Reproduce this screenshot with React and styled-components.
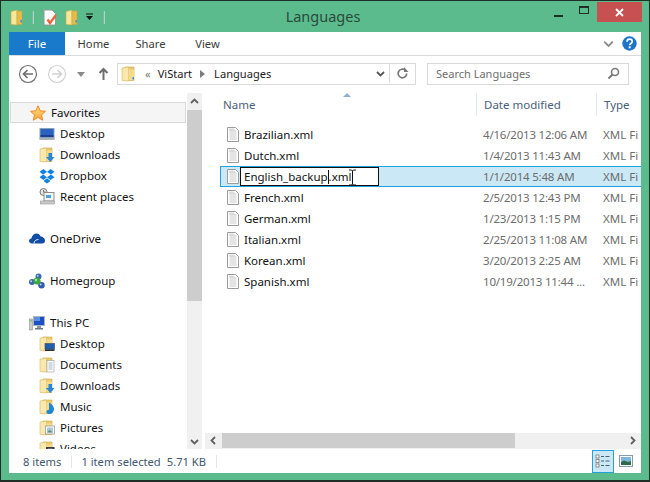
import React from "react";
import styled, { createGlobalStyle } from "styled-components";

const GlobalStyle = createGlobalStyle`
  html, body {
    margin: 0;
    padding: 0;
    background: #fff;
  }
  * {
    box-sizing: border-box;
  }
`;

const uiFont = `"Noto Sans", "Open Sans", sans-serif`;

// window frame
const Window = styled.div`
  width: 650px;
  height: 482px;
  background: #5cbb8d;
  border: 1px solid #1f2f28;
  border-width: 1px 1px 2px 1px;
  display: flex;
  flex-direction: column;
  overflow: hidden;
  font-family: ${uiFont};
  font-size: 11.5px;
  color: #111;
`;

const TitleBar = styled.div`
  height: 31px;
  flex: none;
  position: relative;
  display: flex;
  align-items: flex-start;
  padding: 7px 0 0 9px;
`;

const QuickIcons = styled.div`
  display: flex;
  align-items: center;
  height: 18px;
  gap: 7px;
`;

const QuickSep = styled.div`
  width: 2px;
  height: 13px;
  background: #a9d8c0;
  border-left: 1px solid #7fb79c;
  margin: 0 2px;
`;

const Title = styled.div`
  position: absolute;
  left: 0;
  right: 4px;
  top: 5px;
  text-align: center;
  font-size: 14.5px;
  color: #2a4a3c;
`;

const WindowButtons = styled.div`
  position: absolute;
  right: 7px;
  top: 1px;
  display: flex;
  align-items: flex-start;
`;

const CaptionButton = styled.div`
  width: ${(props) => props.$w}px;
  height: 20px;
  display: flex;
  align-items: center;
  justify-content: center;
  background: ${(props) => props.$bg || "transparent"};
`;

const MinGlyph = styled.div`
  width: 9px;
  height: 2px;
  margin-top: 7px;
  background: #1f2f28;
`;

const MaxGlyph = styled.div`
  width: 10px;
  height: 8px;
  margin-bottom: 4px;
  border: 1px solid #1f2f28;
  border-top-width: 2px;
`;

const Client = styled.div`
  flex: 1;
  margin: 0 8px 7px 8px;
  background: #fff;
  display: flex;
  flex-direction: column;
  min-height: 0;
`;

// ribbon tabs
const Ribbon = styled.div`
  height: 24px;
  flex: none;
  display: flex;
  align-items: stretch;
  border-bottom: 1px solid #dadbdc;
  position: relative;
`;

const FileTab = styled.div`
  width: 56px;
  height: 23px;
  background: #1979ca;
  color: #fff;
  display: flex;
  align-items: center;
  justify-content: center;
`;

const Tab = styled.div`
  width: 57px;
  display: flex;
  align-items: center;
  justify-content: center;
  color: #3b3b3b;
  font-size: 11.2px;
`;

const RibbonRight = styled.div`
  margin-left: auto;
  display: flex;
  align-items: center;
  gap: 8px;
  padding-right: 4px;
`;

// navigation row
const NavRow = styled.div`
  height: 37px;
  flex: none;
  display: flex;
  align-items: flex-start;
  padding: 7px 12px 0 9px;
`;

const NavIcons = styled.div`
  display: flex;
  align-items: center;
  width: 99px;
  height: 22px;
`;

const BackSlot = styled.div`
  display: flex;
  margin-right: 9px;
`;

const AddressBox = styled.div`
  width: 299px;
  height: 22px;
  flex: none;
  border: 1px solid #d9d9d9;
  display: flex;
  align-items: center;
  padding: 0 0 1px 3px;
  color: #1a1a1a;
  font-size: 11.1px;
`;

const Crumb = styled.span`
  margin: ${(props) => props.$m || "0"};
  color: ${(props) => props.$c || "#1a1a1a"};
`;

const AddressEnd = styled.div`
  margin-left: auto;
  display: flex;
  align-items: center;
  height: 100%;
`;

const RefreshCell = styled.div`
  width: 26px;
  height: 100%;
  border-left: 1px solid #d9d9d9;
  margin-left: 4px;
  display: flex;
  align-items: center;
  justify-content: center;
`;

const SearchBox = styled.div`
  width: 202px;
  height: 22px;
  flex: none;
  margin-left: 11px;
  border: 1px solid #d9d9d9;
  display: flex;
  align-items: center;
  justify-content: space-between;
  padding: 0 8px 1px 8px;
  color: #6d6d6d;
  font-size: 11px;
`;

// main body
const Body = styled.div`
  flex: 1;
  min-height: 0;
  display: flex;
`;

const NavPane = styled.div`
  width: 178px;
  flex: none;
  overflow: hidden;
  padding: 9px 1px 0 1px;
`;

const NavItem = styled.div`
  height: 21px;
  display: flex;
  align-items: center;
  gap: 5px;
  padding-left: ${(props) => (props.$child ? 29 : 19)}px;
  margin-bottom: ${(props) => (props.$gap ? 21 : 0)}px;
  background: ${(props) => (props.$active ? "#f5f5f5" : "transparent")};
  border: ${(props) => (props.$active ? "1px solid #d9d9d9" : "none")};
  flex: none;
  white-space: nowrap;
`;

const VScroll = styled.div`
  width: 15px;
  flex: none;
  background: #f0f0f0;
  display: flex;
  flex-direction: column;
  align-items: center;
`;

const ScrollCap = styled.div`
  width: 15px;
  height: ${(props) => props.$h}px;
  flex: none;
  display: flex;
  align-items: center;
  justify-content: center;
`;

const VThumb = styled.div`
  width: 15px;
  height: 191px;
  flex: none;
  background: #cdcdcd;
`;

const Content = styled.div`
  flex: 1;
  min-width: 0;
  margin-left: 3px;
  display: flex;
  flex-direction: column;
  overflow: hidden;
`;

const HeaderRow = styled.div`
  height: 31px;
  flex: none;
  display: flex;
  position: relative;
  padding-left: 18px;
`;

const HeaderCell = styled.div`
  width: ${(props) => props.$w}px;
  flex: none;
  height: 23px;
  display: flex;
  align-items: center;
  padding-left: ${(props) => props.$pad}px;
  color: #4c607a;
  border-right: ${(props) => (props.$line ? "1px solid #e3e8ef" : "none")};
`;

const SortArrow = styled.div`
  position: absolute;
  left: 138px;
  top: 0;
  width: 0;
  height: 0;
  border-left: 4px solid transparent;
  border-right: 4px solid transparent;
  border-bottom: 4px solid #8fb0cc;
`;

const Rows = styled.div`
  flex: 1;
  min-height: 0;
  padding-left: 15px;
`;

const FileRow = styled.div`
  height: 21px;
  display: flex;
  align-items: center;
  white-space: nowrap;
  padding-left: ${(props) => (props.$selected ? 5 : 6)}px;
  background: ${(props) => (props.$selected ? "#cbe8f6" : "transparent")};
  border: ${(props) => (props.$selected ? "1px solid #26a0da" : "none")};
  border-right: none;
  position: relative;
`;

const FileName = styled.div`
  width: 243px;
  flex: none;
  padding-left: 4px;
`;

const RenameBox = styled.div`
  width: 139px;
  height: 19px;
  flex: none;
  margin-right: 104px;
  background: #fff;
  border: 1px solid #111;
  display: flex;
  align-items: center;
  padding-left: 3px;
`;

const Caret = styled.span`
  display: inline-block;
  width: 1px;
  height: 14px;
  background: #111;
  vertical-align: middle;
`;

const Mouse = styled.div`
  position: absolute;
  left: 127px;
  top: 2px;
  line-height: 0;
`;

const DateCell = styled.div`
  width: 120px;
  flex: none;
  color: #6d6d6d;
  letter-spacing: -0.2px;
`;

const TypeCell = styled.div`
  flex: 1;
  color: #6d6d6d;
`;

const HScroll = styled.div`
  height: 16px;
  flex: none;
  background: #f0f0f0;
  display: flex;
  align-items: stretch;
`;

const HThumb = styled.div`
  width: 293px;
  height: 15px;
  background: #cdcdcd;
`;

const HCap = styled.div`
  width: ${(props) => props.$w}px;
  height: 15px;
  flex: none;
  display: flex;
  align-items: center;
  justify-content: center;
  margin-left: ${(props) => (props.$end ? "auto" : "0")};
`;

// status bar
const StatusBar = styled.div`
  height: 24px;
  flex: none;
  display: flex;
  align-items: center;
  padding-left: 14px;
  color: #3f5670;
  font-size: 11.2px;
  position: relative;
`;

const StatusText = styled.span`
  margin-right: ${(props) => props.$mr || 0}px;
`;

const StatusSep = styled.div`
  width: 1px;
  height: 13px;
  background: #e6e6e6;
  margin-right: ${(props) => props.$mr || 0}px;
`;

const ViewButtons = styled.div`
  margin-left: auto;
  display: flex;
  align-items: center;
  height: 100%;
  padding-right: 7px;
  gap: 3px;
`;

const ViewButton = styled.div`
  width: ${(props) => (props.$active ? 22 : 17)}px;
  height: 23px;
  display: flex;
  align-items: center;
  justify-content: center;
  background: ${(props) => (props.$active ? "#cbe8f6" : "transparent")};
  border: ${(props) => (props.$active ? "1px solid #26a0da" : "none")};
`;

// icons
const Folder = ({ overlay, size = 16 }) => (
  <svg width={size} height={size} viewBox="0 0 16 16">
    <path d="M4 1h9v13.500H4z" fill="#ecca6c" stroke="#cfa94e" strokeWidth="0.6" />
    <path d="M1 2 7.500 1v14L1 14.500z" fill="#f9e9ae" stroke="#d6b65f" strokeWidth="0.6" />
    <path d="M7.500 3.500H13V14H7.500z" fill="#f6dc8a" />
    {overlay}
  </svg>
);

const DownArrow = (
  <path d="M9.500 6h3.500v4h2.500l-4.200 5-4.300-5h2.500z" fill="#2a84d8" />
);

const overlays = {
  desktop: (
    <>
      <rect x="6" y="7.500" width="9.500" height="6" fill="#1f5fae" stroke="#445" strokeWidth="0.6" />
      <rect x="6" y="13.500" width="9.500" height="1.500" fill="#333" />
    </>
  ),
  documents: (
    <>
      <rect x="8" y="3.500" width="7" height="11.500" fill="#fff" stroke="#9a9a9a" strokeWidth="0.6" />
      <path d="M9.500 6h4M9.500 8h4M9.500 10h4M9.500 12h4" stroke="#8aa3c0" strokeWidth="0.8" />
    </>
  ),
  downloads: DownArrow,
  music: (
    <path d="M10 3.500c3 1.500 5 4 5 6.500 0 3-2.500 5-5 5-1.500 0-2.500-1-2.500-2.300 0-1.200 1-2 2.500-2z" fill="#1f86d6" />
  ),
  pictures: (
    <>
      <rect x="6.500" y="6" width="9" height="8" fill="#fff" stroke="#8d8d8d" strokeWidth="0.7" />
      <rect x="8" y="7.500" width="6" height="5" fill="#a9c9d8" />
      <path d="M8 12.500l2.500-2.500 3.500 2.500z" fill="#5f8a76" />
    </>
  ),
  videos: (
    <>
      <rect x="7" y="6" width="8.500" height="9" fill="#3b3b3b" />
      <rect x="9" y="7.500" width="4.500" height="4" fill="#8aa3c0" />
    </>
  ),
};

const DocIcon = () => (
  <svg width="14" height="17" viewBox="0 0 14 17">
    <path d="M1.500 1.500h8l3 3v11h-11z" fill="#fff" stroke="#9b9b9b" />
    <path d="M3.500 5h7M3.500 7h7M3.500 9h7M3.500 11h7M3.500 13h7" stroke="#c9c9c9" />
    <path d="M3 3h5M3 4h6" stroke="#bdbdbd" strokeWidth="0.6" />
  </svg>
);

const Star = () => (
  <svg width="16" height="16" viewBox="0 0 16 16">
    <defs>
      <linearGradient id="starFill" x1="0" y1="0" x2="0" y2="1">
        <stop offset="0" stopColor="#fde07a" />
        <stop offset="1" stopColor="#f9a63a" />
      </linearGradient>
    </defs>
    <path d="M8 .8l2.200 5 5.300.5-4 3.600 1.200 5.300L8 12.400l-4.700 2.800 1.200-5.300-4-3.600 5.300-.5z" fill="url(#starFill)" stroke="#f08a2c" strokeWidth="1" />
  </svg>
);

const MonitorIcon = () => (
  <svg width="16" height="16" viewBox="0 0 16 16">
    <rect x="0.500" y="2" width="15" height="11" fill="#8ba1b5" />
    <rect x="1.500" y="3" width="13" height="8" fill="#2a62c0" />
    <rect x="1.500" y="9" width="13" height="2" fill="#1b3f95" />
    <rect x="0.500" y="12" width="15" height="2" fill="#a6b1ba" />
  </svg>
);

const DropboxIcon = () => (
  <svg width="16" height="16" viewBox="0 0 16 16" fill="#0f82e6">
    <path d="M4.500 1 .5 3.800l3.500 2.700L8 4z" />
    <path d="M11.500 1l4 2.800-3.500 2.700L8 4z" />
    <path d="M4 6.500.5 9.300l4 2.700L8 9.300z" />
    <path d="M12 6.500l3.500 2.800-4 2.700L8 9.300z" />
    <path d="M4.500 13l3.500-2.700 3.500 2.700-3.500 2.500z" />
  </svg>
);

const RecentIcon = () => (
  <svg width="16" height="17" viewBox="0 0 16 17">
    <circle cx="4.500" cy="4" r="3.500" fill="#e6e6e6" stroke="#777" />
    <path d="M4.500 2v2h2" stroke="#555" fill="none" strokeWidth="0.8" />
    <rect x="5" y="4.500" width="10" height="8.500" fill="#f4f4f4" stroke="#8c8c8c" />
    <rect x="7" y="7" width="5" height="3" fill="#4aa3d8" />
    <rect x="1.500" y="13" width="14" height="3" fill="#c9c9c9" stroke="#999" strokeWidth="0.6" />
  </svg>
);

const CloudIcon = () => (
  <svg width="16" height="11" viewBox="0 0 16 11">
    <path d="M3 10.500C1 10.500 0 9 0 7.800 0 6.500 1 5.500 2.300 5.400 3 2.500 5.200.5 7.500.5c2 0 3.500 1.300 4 3 2.300 0 4.500 1.800 4.500 4.200 0 1.700-1.300 2.800-2.800 2.800z" fill="#0f4da8" />
    <path d="M5 10.500c0-2.500 2-4 4.500-4" stroke="#fff" strokeWidth="0.9" fill="none" />
  </svg>
);

const HomegroupIcon = () => (
  <svg width="16" height="16" viewBox="0 0 16 16">
    <path d="M9 3 3 9l9.500 3z" stroke="#9dbce0" strokeWidth="1" fill="none" />
    <circle cx="9.500" cy="3.500" r="3" fill="#3a66b5" />
    <circle cx="8.700" cy="2.700" r="1" fill="#b9cdee" />
    <circle cx="3" cy="9" r="3" fill="#3a66b5" />
    <circle cx="2.200" cy="8.200" r="1" fill="#b9cdee" />
    <circle cx="12.500" cy="12.300" r="3.200" fill="#2f5aa8" />
    <circle cx="11.700" cy="11.500" r="1" fill="#b9cdee" />
    <circle cx="8" cy="8" r="3.500" fill="#3bab3b" />
    <circle cx="7" cy="7" r="1.200" fill="#a5e39a" />
  </svg>
);

const PCIcon = () => (
  <svg width="16" height="16" viewBox="0 0 16 16">
    <rect x="0.500" y="4" width="3" height="11" fill="#c8ccc8" stroke="#8c9090" strokeWidth="0.6" />
    <rect x="1.200" y="5" width="1.500" height="1.500" fill="#5cc45c" />
    <rect x="4" y="1" width="12" height="10" fill="#a9b5c0" />
    <rect x="5" y="2" width="10" height="8" fill="#1d4fc4" />
    <rect x="5" y="2" width="6" height="4" fill="#5f8ee6" />
    <rect x="8" y="11" width="4" height="2" fill="#8d98a2" />
    <rect x="6" y="13" width="8" height="1.500" fill="#6d7780" />
  </svg>
);

const QuickDoc = () => (
  <svg width="15" height="17" viewBox="0 0 15 17">
    <path d="M1 1h8l3.500 3.500V16H1z" fill="#fff" stroke="#8d9a94" />
    <path d="M4.500 10.500l2.500 3.500 6-8" stroke="#e8663c" strokeWidth="2.400" fill="none" />
  </svg>
);

const QuickFolder = () => (
  <svg width="13" height="17" viewBox="0 0 13 17">
    <path d="M1 2.500 7 1v15l-6-.5z" fill="#f8e69a" stroke="#c7a83f" strokeWidth="0.6" />
    <path d="M7 2h5v13.500H7z" fill="#e5bb4c" stroke="#c7a83f" strokeWidth="0.6" />
    <rect x="10.500" y="11" width="1.500" height="2.500" fill="#3c8fd8" />
  </svg>
);

const Chevron = ({ color = "#555", dir = "down", size = 9, w = 1.800 }) => {
  const paths = {
    down: "M1 3l3.500 3.500L8 3",
    up: "M1 6l3.500-3.500L8 6",
    left: "M6 1L2.500 4.500 6 8",
    right: "M3 1l3.500 3.500L3 8",
  };
  return (
    <svg width={size} height={size} viewBox="0 0 9 9">
      <path d={paths[dir]} fill="none" stroke={color} strokeWidth={w} />
    </svg>
  );
};

const RoundArrow = ({ color, dir }) => (
  <svg width="20" height="20" viewBox="0 0 20 20">
    <circle cx="10" cy="10" r="8.500" fill="#fff" stroke={color} strokeWidth="1.200" />
    <path
      d={dir === "left" ? "M15 10H6M9.500 6 5.500 10l4 4" : "M5 10h9M10.500 6l4 4-4 4"}
      fill="none"
      stroke={color}
      strokeWidth="1.700"
    />
  </svg>
);

const favorites = [
  { label: "Desktop", icon: <MonitorIcon /> },
  { label: "Downloads", icon: <Folder overlay={overlays.downloads} /> },
  { label: "Dropbox", icon: <DropboxIcon /> },
  { label: "Recent places", icon: <RecentIcon />, gap: true },
];

const pcFolders = [
  ["Desktop", "desktop"],
  ["Documents", "documents"],
  ["Downloads", "downloads"],
  ["Music", "music"],
  ["Pictures", "pictures"],
  ["Videos", "videos"],
];

const files = [
  ["Brazilian.xml", "4/16/2013 12:06 AM"],
  ["Dutch.xml", "1/4/2013 11:43 AM"],
  ["English_backup.xml", "1/1/2014 5:48 AM", true],
  ["French.xml", "2/5/2013 12:43 PM"],
  ["German.xml", "1/23/2013 1:15 PM"],
  ["Italian.xml", "2/25/2013 11:08 AM"],
  ["Korean.xml", "3/20/2013 2:25 AM"],
  ["Spanish.xml", "10/19/2013 11:44 ..."],
];

const App = () => (
  <>
    <GlobalStyle />
    <Window>
      <TitleBar>
        <QuickIcons>
          <QuickFolder />
          <QuickSep />
          <QuickDoc />
          <QuickFolder />
          <svg width="9" height="9" viewBox="0 0 9 9">
            <path d="M1 1h7" stroke="#111" />
            <path d="M1 3h7L4.500 7z" fill="#111" />
          </svg>
          <QuickSep />
        </QuickIcons>
        <Title>Languages</Title>
        <WindowButtons>
          <CaptionButton $w={26}><MinGlyph /></CaptionButton>
          <CaptionButton $w={26}><MaxGlyph /></CaptionButton>
          <CaptionButton $w={45} $bg="#c75050">
            <svg width="9" height="9" viewBox="0 0 9 9">
              <path d="M1 1l7 7M8 1 1 8" stroke="#fff" strokeWidth="1.800" />
            </svg>
          </CaptionButton>
        </WindowButtons>
      </TitleBar>
      <Client>
        <Ribbon>
          <FileTab>File</FileTab>
          <Tab>Home</Tab>
          <Tab>Share</Tab>
          <Tab>View</Tab>
          <RibbonRight>
            <Chevron color="#8a8a8a" size={11} w={1.500} />
            <svg width="15" height="15" viewBox="0 0 15 15">
              <circle cx="7.500" cy="7.500" r="7.200" fill="#1c75c8" />
              <path d="M5 5.700C5 4 6.200 3.200 7.600 3.200 9 3.200 10.200 4 10.200 5.500c0 2-2.500 2-2.500 3.800" fill="none" stroke="#fff" strokeWidth="1.700" />
              <rect x="6.700" y="10.300" width="2" height="2" fill="#fff" />
            </svg>
          </RibbonRight>
        </Ribbon>
        <NavRow>
          <NavIcons>
            <BackSlot><RoundArrow color="#6e6e6e" dir="left" /></BackSlot>
            <RoundArrow color="#d2d2d2" dir="right" />
            <svg width="30" height="9" viewBox="0 0 30 9">
              <path d="M10 2h8l-4 5z" fill="#8a8a8a" />
            </svg>
            <svg width="13" height="14" viewBox="0 0 13 14">
              <path d="M6.500 13V2M2.500 6l4-4 4 4" fill="none" stroke="#6e6e6e" strokeWidth="2" />
            </svg>
          </NavIcons>
          <AddressBox>
            <Folder overlay={<rect x="11.500" y="11" width="1.500" height="2.500" fill="#3c8fd8" />} />
            <Crumb $m="0 0 0 8px" $c="#7a7a7a">«</Crumb>
            <Crumb $m="0 0 0 7px">ViStart</Crumb>
            <svg width="22" height="8" viewBox="0 0 22 8">
              <path d="M8 0l5 4-5 4z" fill="#7d7d7d" />
            </svg>
            <Crumb>Languages</Crumb>
            <AddressEnd>
              <Chevron color="#555" />
              <RefreshCell>
                <svg width="13" height="13" viewBox="0 0 13 13">
                  <path d="M10.700 6.500a4.300 4.300 0 1 1-1.500-3.300" fill="none" stroke="#777" strokeWidth="1.700" />
                  <path d="M8 0v5h4.500z" fill="#777" />
                </svg>
              </RefreshCell>
            </AddressEnd>
          </AddressBox>
          <SearchBox>
            <span>Search Languages</span>
            <svg width="13" height="13" viewBox="0 0 13 13">
              <circle cx="8" cy="5" r="3.500" fill="none" stroke="#777" strokeWidth="1.500" />
              <path d="M5.500 7.500 1.500 11.500" stroke="#777" strokeWidth="2" />
            </svg>
          </SearchBox>
        </NavRow>
        <Body>
          <NavPane>
            <NavItem $active>
              <Star />
              <span>Favorites</span>
            </NavItem>
            {favorites.map((item) => (
              <NavItem key={item.label} $child $gap={item.gap}>
                {item.icon}
                <span>{item.label}</span>
              </NavItem>
            ))}
            <NavItem $gap>
              <CloudIcon />
              <span>OneDrive</span>
            </NavItem>
            <NavItem $gap>
              <HomegroupIcon />
              <span>Homegroup</span>
            </NavItem>
            <NavItem>
              <PCIcon />
              <span>This PC</span>
            </NavItem>
            {pcFolders.map(([label, key]) => (
              <NavItem key={label} $child>
                <Folder overlay={overlays[key]} />
                <span>{label}</span>
              </NavItem>
            ))}
          </NavPane>
          <VScroll>
            <ScrollCap $h={17}><Chevron dir="up" color="#606060" /></ScrollCap>
            <VThumb />
            <ScrollCap $h={132} />
            <ScrollCap $h={17}><Chevron color="#606060" /></ScrollCap>
          </VScroll>
          <Content>
            <HeaderRow>
              <SortArrow />
              <HeaderCell $w={254} $line $pad={0}>Name</HeaderCell>
              <HeaderCell $w={120} $line $pad={7}>Date modified</HeaderCell>
              <HeaderCell $w={44} $pad={7}>Type</HeaderCell>
            </HeaderRow>
            <Rows>
              {files.map(([name, date, selected]) => (
                <FileRow key={name} $selected={selected}>
                  <DocIcon />
                  {selected ? (
                    <RenameBox>
                      English_backup<Caret />.xml
                      <Mouse>
                        <svg width="9" height="17" viewBox="0 0 9 17">
                          <path d="M1 1h2.500l1 1 1-1H8M4.500 2v13M1 16h2.500l1-1 1 1H8" fill="none" stroke="#111" strokeWidth="1" />
                        </svg>
                      </Mouse>
                    </RenameBox>
                  ) : (
                    <FileName>{name}</FileName>
                  )}
                  <DateCell>{date}</DateCell>
                  <TypeCell>XML Fi</TypeCell>
                </FileRow>
              ))}
            </Rows>
            <HScroll>
              <HCap $w={17}><Chevron dir="left" color="#606060" /></HCap>
              <HThumb />
              <HCap $w={17} $end><Chevron dir="right" color="#606060" /></HCap>
            </HScroll>
          </Content>
        </Body>
        <StatusBar>
          <StatusText $mr={10}>8 items</StatusText>
          <StatusSep $mr={9} />
          <StatusText $mr={6}>1 item selected</StatusText>
          <StatusText $mr={10}>5.71 KB</StatusText>
          <StatusSep />
          <ViewButtons>
            <ViewButton $active>
              <svg width="16" height="14" viewBox="0 0 16 14">
                <rect x="1" y="1" width="3" height="3" fill="#fff" stroke="#777" strokeWidth="0.8" />
                <rect x="1" y="5.500" width="3" height="3" fill="#fff" stroke="#777" strokeWidth="0.8" />
                <rect x="1" y="10" width="3" height="3" fill="#fff" stroke="#777" strokeWidth="0.8" />
                <path d="M6 2.500h3M10.500 2.500h4M6 7h3M10.500 7h4M6 11.500h3M10.500 11.500h4" stroke="#4a6070" strokeWidth="1" />
              </svg>
            </ViewButton>
            <ViewButton>
              <svg width="14" height="12" viewBox="0 0 14 12">
                <rect x="0.500" y="0.500" width="13" height="11" fill="#fff" stroke="#8a9aa8" />
                <rect x="2" y="2" width="10" height="8" fill="#7fb6de" />
                <path d="M2 10V7l3-1.500L9 7l3-1v4z" fill="#2f6b4a" />
              </svg>
            </ViewButton>
          </ViewButtons>
        </StatusBar>
      </Client>
    </Window>
  </>
);

export default App;
